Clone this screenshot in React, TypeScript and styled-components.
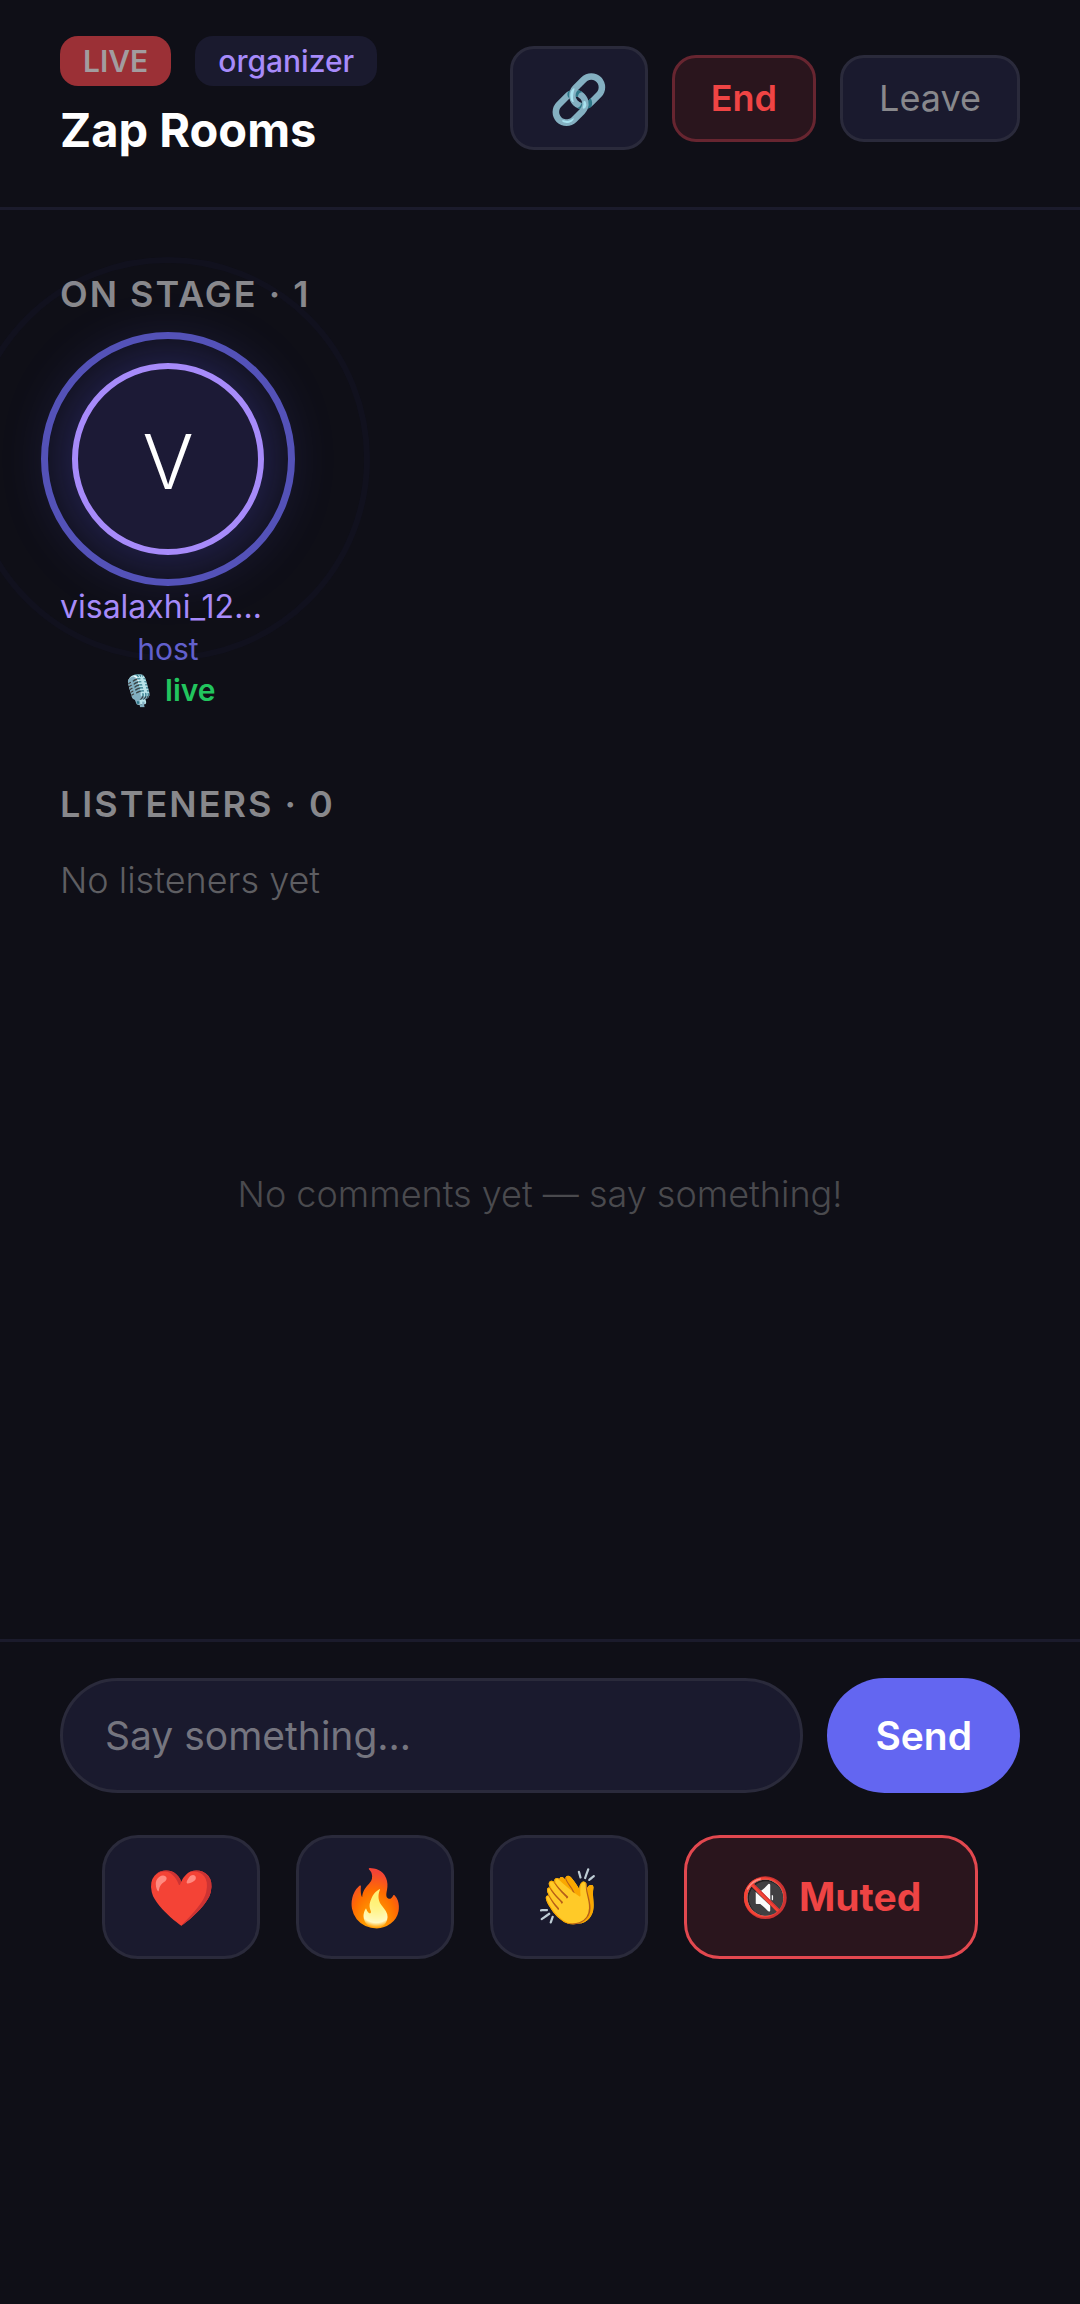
import React from "react";
import styled, { createGlobalStyle, css } from "styled-components";

const color = {
  page: "#0f0f17",
  surface: "#1a1a2e",
  line: "#1b1b2c",
  edge: "#2a2a3b",
  violet: "#a78bfa",
  indigo: "#6366f1",
  red: "#ef4444",
  green: "#22c55e",
  muted: "#88888c",
};

const GlobalStyle = createGlobalStyle`
  *, *::before, *::after { box-sizing: border-box; }
  body {
    margin: 0;
    background: ${color.page};
    color: #fff;
    font-family: Inter, "Open Sans", "Liberation Sans", sans-serif;
    overflow-x: hidden;
  }
  button, input { font-family: inherit; }
  h1, h2, p { margin: 0; }
`;

const Page = styled.div`
  display: flex;
  flex-direction: column;
  min-height: 100vh;
`;

const Header = styled.header`
  display: flex;
  justify-content: space-between;
  align-items: center;
  padding: 36px 60px 47px;
  border-bottom: 3px solid ${color.line};
`;

const RoomInfo = styled.div`
  display: flex;
  flex-direction: column;
  gap: 14px;
`;

const Badges = styled.div`
  display: flex;
  gap: 24px;
`;

const Badge = styled.span<{ $live?: boolean }>`
  padding: 0 23px;
  border-radius: 18px;
  font-size: 30px;
  line-height: 50px;
  font-weight: ${(p) => (p.$live ? 600 : 500)};
  color: ${(p) => (p.$live ? "#a29c9f" : color.violet)};
  background: ${(p) => (p.$live ? "#9b3036" : color.surface)};
`;

const Title = styled.h1`
  font-size: 47px;
  line-height: 60px;
  font-weight: 700;
`;

const Actions = styled.div`
  display: flex;
  align-items: center;
  gap: 24px;
`;

const ActionButton = styled.button<{ $tone?: "danger" | "icon" }>`
  display: flex;
  align-items: center;
  justify-content: center;
  height: 87px;
  padding: 0 36px;
  border: 3px solid ${color.edge};
  border-radius: 24px;
  background: ${color.surface};
  color: ${color.muted};
  font-size: 36px;
  font-weight: 400;
  ${(p) =>
    p.$tone === "danger" &&
    css`
      border-color: #672530;
      background: #2a151d;
      color: ${color.red};
      font-weight: 600;
    `}
  ${(p) =>
    p.$tone === "icon" &&
    css`
      height: 104px;
      font-size: 48px;
    `}
`;

const Main = styled.main`
  flex: 1;
  padding: 60px;
`;

const SectionTitle = styled.h2`
  font-size: 36px;
  line-height: 48px;
  font-weight: 600;
  letter-spacing: 2px;
  color: ${color.muted};
`;

const Speaker = styled.article`
  display: flex;
  flex-direction: column;
  align-items: center;
  width: 216px;
  padding-top: 45px;
`;

const Avatar = styled.div`
  position: relative;
  display: grid;
  place-items: center;
  width: 192px;
  height: 192px;
  margin-bottom: 30px;
  padding-top: 4px;
  border: 6px solid ${color.violet};
  border-radius: 50%;
  background: #1c1a36;
  box-shadow: 0 0 60px 10px rgba(88, 84, 220, 0.32);
  font-size: 76px;
  font-weight: 300;
`;

const Ring = styled.span<{ $reach: number; $faint?: boolean }>`
  position: absolute;
  inset: -${(p) => p.$reach}px;
  border: ${(p) => (p.$faint ? "6px solid rgba(99, 102, 241, 0.03)" : "7px solid #5452b8")};
  border-radius: 50%;
`;

const Name = styled.p`
  width: 100%;
  font-size: 32px;
  line-height: 43px;
  color: ${color.violet};
  white-space: nowrap;
`;

const Role = styled.p`
  font-size: 30px;
  line-height: 42px;
  color: #6260cc;
`;

const MicState = styled.p`
  font-size: 30px;
  line-height: 40px;
  font-weight: 600;
  color: ${color.green};
`;

const Listeners = styled.section`
  padding-top: 70px;
`;

const Empty = styled.p`
  padding-top: 28px;
  font-size: 36px;
  line-height: 48px;
  font-weight: 300;
  color: #5e5e62;
`;

const Comments = styled.section`
  padding-top: 266px;
  text-align: center;
  font-size: 36px;
  line-height: 48px;
  font-weight: 300;
  color: #4a4a4e;
`;

const Footer = styled.footer`
  display: flex;
  flex-direction: column;
  gap: 42px;
  padding: 36px 60px 345px;
  border-top: 3px solid ${color.line};
`;

const Composer = styled.form`
  display: flex;
  gap: 24px;
`;

const Message = styled.input`
  flex: 1;
  min-width: 0;
  height: 115px;
  padding: 0 42px;
  border: 3px solid ${color.edge};
  border-radius: 60px;
  background: ${color.surface};
  color: #fff;
  font-size: 39px;
  outline: none;
  &::placeholder { color: #75757f; opacity: 1; }
`;

const Send = styled.button`
  padding: 0 48px;
  border: 0;
  border-radius: 60px;
  background: ${color.indigo};
  color: #fff;
  font-size: 39px;
  font-weight: 600;
`;

const Reactions = styled.div`
  display: flex;
  justify-content: center;
  gap: 36px;
`;

const Reaction = styled.button<{ $muted?: boolean }>`
  display: flex;
  align-items: center;
  justify-content: center;
  height: 124px;
  padding: 0 ${(p) => (p.$muted ? 54 : 42)}px;
  border: 3px solid ${(p) => (p.$muted ? "#e2484f" : color.edge)};
  border-radius: 36px;
  background: ${(p) => (p.$muted ? "#2a151d" : color.surface)};
  color: ${color.red};
  font-size: ${(p) => (p.$muted ? 39 : 55)}px;
  font-weight: 700;
`;

export default function App() {
  return (
    <>
      <GlobalStyle />
      <Page>
        <Header>
          <RoomInfo>
            <Badges>
              <Badge $live>LIVE</Badge>
              <Badge>organizer</Badge>
            </Badges>
            <Title>Zap Rooms</Title>
          </RoomInfo>
          <Actions>
            <ActionButton $tone="icon" aria-label="Copy link">🔗</ActionButton>
            <ActionButton $tone="danger">End</ActionButton>
            <ActionButton>Leave</ActionButton>
          </Actions>
        </Header>
        <Main>
          <section>
            <SectionTitle>ON STAGE · 1</SectionTitle>
            <Speaker>
              <Avatar>
                V
                <Ring $reach={37} />
                <Ring $reach={112} $faint />
              </Avatar>
              <Name>visalaxhi_12…</Name>
              <Role>host</Role>
              <MicState>🎙️ live</MicState>
            </Speaker>
          </section>
          <Listeners>
            <SectionTitle>LISTENERS · 0</SectionTitle>
            <Empty>No listeners yet</Empty>
          </Listeners>
          <Comments>No comments yet — say something!</Comments>
        </Main>
        <Footer>
          <Composer onSubmit={(e) => e.preventDefault()}>
            <Message aria-label="Comment" placeholder="Say something..." />
            <Send type="submit">Send</Send>
          </Composer>
          <Reactions>
            <Reaction aria-label="Love">❤️</Reaction>
            <Reaction aria-label="Fire">🔥</Reaction>
            <Reaction aria-label="Clap">👏</Reaction>
            <Reaction $muted>🔇 Muted</Reaction>
          </Reactions>
        </Footer>
      </Page>
    </>
  );
}
